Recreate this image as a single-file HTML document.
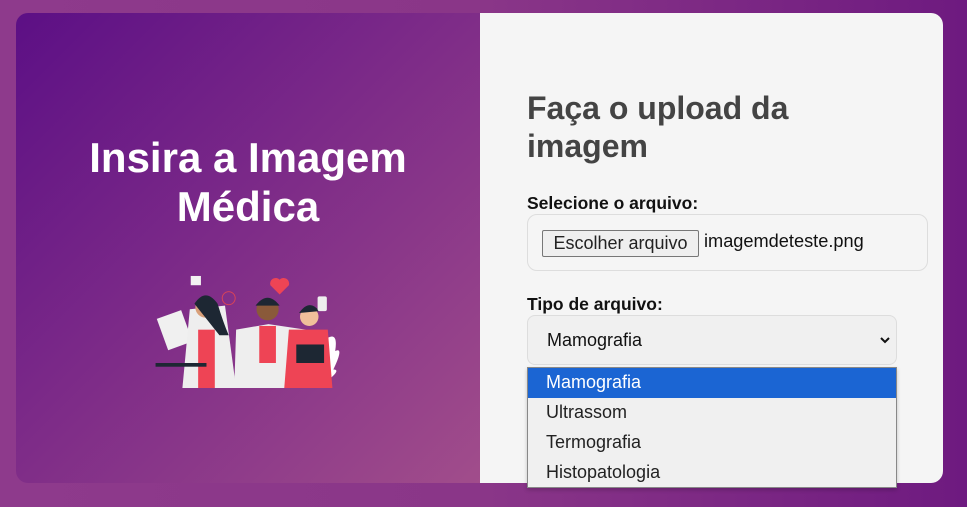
<!DOCTYPE html>
<html><head><meta charset="utf-8"><style>
*{margin:0;padding:0;box-sizing:border-box}
body{width:967px;height:507px;overflow:hidden;font-family:"Liberation Sans",Arial,sans-serif;background:linear-gradient(90deg,#8e3a8c 0%,#8a3688 50%,#6e1a80 100%);position:relative}
.card{position:absolute;left:16px;top:13px;width:927px;height:470px;border-radius:12px;overflow:hidden;display:flex}
.left{width:464px;height:100%;background:linear-gradient(135deg,#5c0f85 0%,#7c2a88 45%,#a14d8b 100%);position:relative}
.left h1{position:absolute;left:0;width:464px;top:120px;text-align:center;color:#fff;font-size:42px;line-height:49px;font-weight:bold}
.right{flex:1;background:#f5f5f5;position:relative}
.right h2{position:absolute;left:47px;top:76px;font-size:32px;line-height:38px;color:#444;font-weight:bold}
.lbl{position:absolute;left:47px;font-size:17.5px;font-weight:bold;color:#111}
.filebox{position:absolute;left:47px;top:201px;width:401px;height:57px;border:1px solid #ddd;border-radius:10px}
.btn{position:absolute;left:14px;top:15px;width:157px;height:27px;border:1px solid #777;border-radius:2px;background:#efefef;font-size:18px;line-height:25px;text-align:center;color:#222}
.fn{position:absolute;left:176px;top:16px;font-size:18.2px;color:#111}
.sel{position:absolute;left:47px;top:302px;width:370px;height:50px;border:1px solid #ddd;border-radius:8px;background:#f0f0f0;font-size:18px;line-height:48px;padding-left:19px;color:#111}
.dd{position:absolute;left:527px;top:367px;width:370px;height:121px;border:1px solid #888;background:#f0f0f0;font-size:18px;color:#222;box-shadow:0 2px 4px rgba(0,0,0,.2)}
.dd div{height:30px;line-height:29px;padding-left:18px}
.dd .a{background:#1b65d3;color:#fff}
</style></head><body>
<div class="card">
<div class="left">
<h1>Insira a Imagem<br>Médica</h1>
<svg style="position:absolute;left:124px;top:250px" width="220" height="125" viewBox="0 0 220 135">
<path d="M188 85 q18 -15 14 10 q10 -5 -2 20 q10 0 -10 15 h-20z" fill="#fff"/>
<rect x="14" y="55" width="28" height="36" fill="#f0f0f0" transform="rotate(-20 27 71)"/>
<path d="M45 50 l38 -4 l12 89 l-58 0z" fill="#eee"/>
<rect x="54" y="72" width="18" height="63" fill="#ee4455"/>
<circle cx="62" cy="48" r="11" fill="#d9a07a"/><path d="M50 44 q12 -18 25 0 q6 20 12 34 l-10 0z" fill="#1d2733"/>
<path d="M95 72 l35 -6 l40 6 l5 63 l-82 0z" fill="#eee"/>
<rect x="120" y="68" width="18" height="40" fill="#ee4455"/>
<circle cx="129" cy="50" r="12" fill="#8a5a3a"/><path d="M116 46 q13 -17 26 0z" fill="#1d2733"/>
<path d="M152 72 l42 0 l5 63 l-52 0z" fill="#ee4455"/>
<rect x="160" y="88" width="30" height="20" fill="#1d2733"/>
<circle cx="174" cy="58" r="10" fill="#f0c09a"/><path d="M163 54 q11 -16 22 -2z" fill="#1d2733"/>
<rect x="8" y="108" width="55" height="4" fill="#1d2733"/>
<rect x="46" y="14" width="11" height="10" fill="#f2f2f2"/>
<path d="M132 24 a6 6 0 0 1 10 -6 a6 6 0 0 1 10 6 l-10 10z" fill="#ee4455"/>
<circle cx="87" cy="38" r="7" fill="none" stroke="#d45" stroke-width="1"/>
<rect x="183" y="36" width="10" height="16" rx="2" fill="#eee"/>
</svg>
</div>
<div class="right">
<h2>Faça o upload da<br>imagem</h2>
<div class="lbl" style="top:180px">Selecione o arquivo:</div>
<div class="filebox"><div class="btn">Escolher arquivo</div><div class="fn">imagemdeteste.png</div></div>
<div class="lbl" style="top:281px">Tipo de arquivo:</div>
<div class="sel">Mamografia<svg style="position:absolute;right:6px;top:20px" width="10" height="8" viewBox="0 0 10 8"><path d="M1 2 L5 6 L9 2" stroke="#111" stroke-width="2" fill="none"/></svg></div>
</div>
</div>
<div class="dd"><div class="a">Mamografia</div><div>Ultrassom</div><div>Termografia</div><div>Histopatologia</div></div>
</body></html>
